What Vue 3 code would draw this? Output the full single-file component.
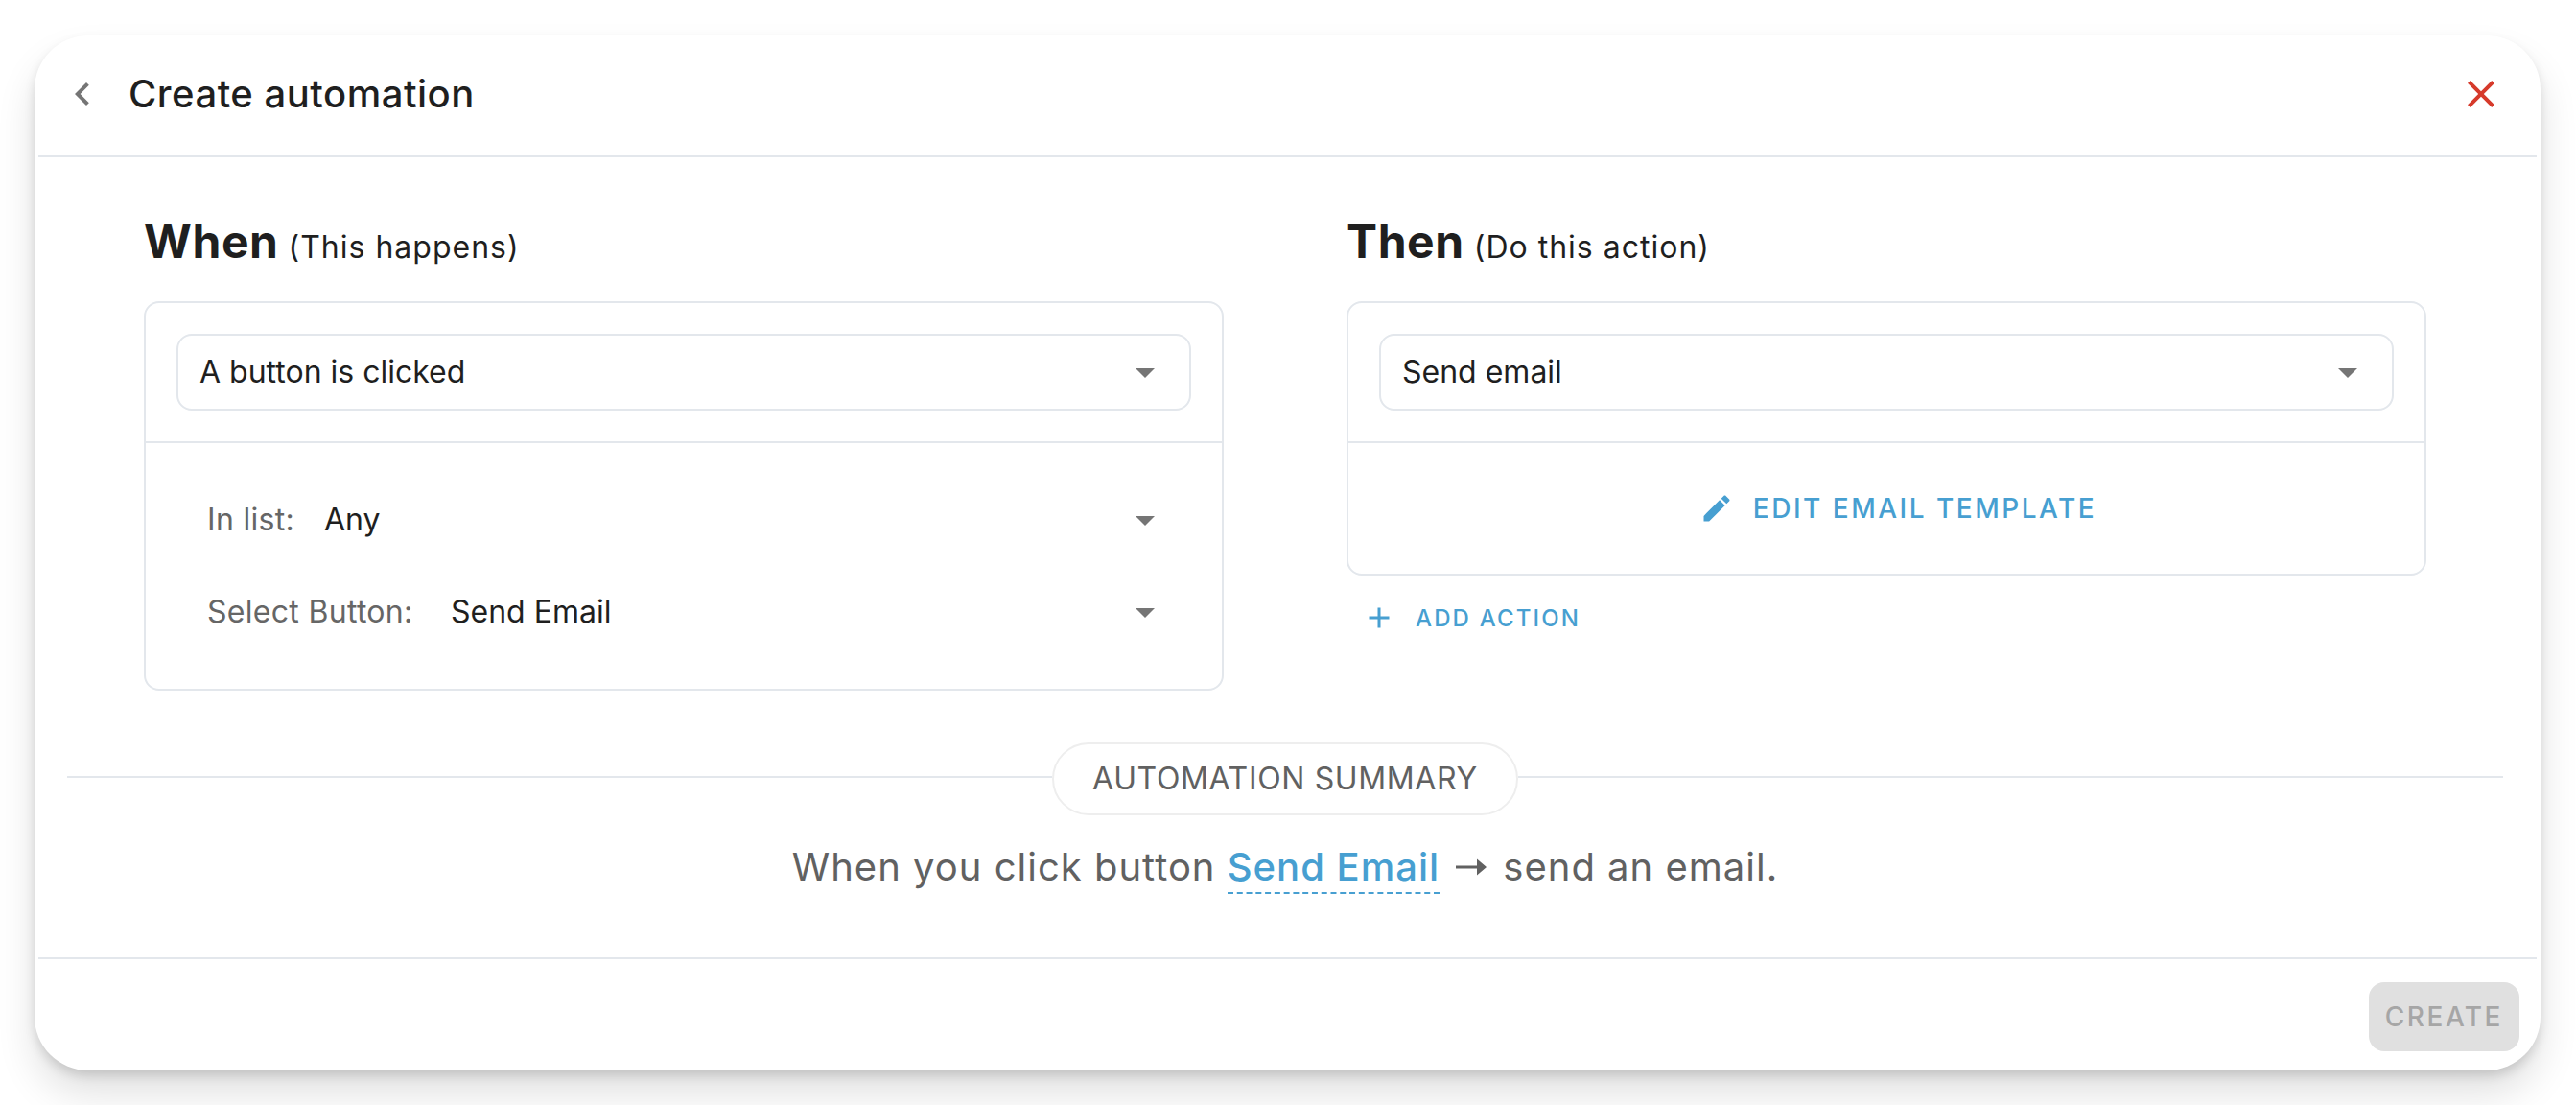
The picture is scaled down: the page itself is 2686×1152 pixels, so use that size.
<template>
  <main class="automation-page">
    <section class="automation-dialog" aria-labelledby="dialog-title">
      <header class="automation-dialog__header">
        <button class="icon-btn" type="button" aria-label="Back">
          <svg viewBox="0 0 24 24"><path :d="icons.chevronLeft" /></svg>
        </button>
        <h1 id="dialog-title">Create automation</h1>
        <button class="icon-btn icon-btn--close" type="button" aria-label="Close">
          <svg viewBox="0 0 24 24"><path :d="icons.close" /></svg>
        </button>
      </header>

      <div class="automation-dialog__body">
        <div class="columns">
          <div class="column">
            <h2>When <small>(This happens)</small></h2>
            <div class="panel">
              <div class="panel__head">
                <div class="field field--outlined">
                  <select v-model="trigger" aria-label="Trigger">
                    <option v-for="t in triggers" :key="t">{{ t }}</option>
                  </select>
                  <svg class="field__caret" viewBox="0 0 24 24"><path :d="icons.menuDown" /></svg>
                </div>
              </div>
              <div class="panel__fields">
                <div v-for="f in fields" :key="f.id" class="field">
                  <label :for="f.id" :style="{ width: f.labelWidth + 'px' }">{{ f.label }}</label>
                  <select :id="f.id" v-model="f.value">
                    <option v-for="o in f.options" :key="o">{{ o }}</option>
                  </select>
                  <svg class="field__caret" viewBox="0 0 24 24"><path :d="icons.menuDown" /></svg>
                </div>
              </div>
            </div>
          </div>

          <div class="column">
            <h2>Then <small>(Do this action)</small></h2>
            <div class="panel">
              <div class="panel__head">
                <div class="field field--outlined">
                  <select v-model="action" aria-label="Action">
                    <option v-for="a in actions" :key="a">{{ a }}</option>
                  </select>
                  <svg class="field__caret" viewBox="0 0 24 24"><path :d="icons.menuDown" /></svg>
                </div>
              </div>
              <div class="panel__action">
                <button class="text-btn" type="button">
                  <svg viewBox="0 0 24 24"><path :d="icons.pencil" /></svg>
                  Edit email template
                </button>
              </div>
            </div>
            <button class="text-btn text-btn--small" type="button">
              <svg viewBox="0 0 24 24"><path :d="icons.plus" /></svg>
              Add action
            </button>
          </div>
        </div>

        <div class="summary">
          <div class="summary__divider"><span>AUTOMATION SUMMARY</span></div>
          <p>
            When you click button <a href="#button">{{ fields[1].value }}</a>
            <svg class="summary__arrow" viewBox="0 0 32 18" role="img" aria-label="then">
              <path d="M0 7.5H22V0.5L32 9L22 17.5V10.5H0Z" />
            </svg>
            send an email.
          </p>
        </div>
      </div>

      <footer class="automation-dialog__footer">
        <button class="create-btn" type="button" disabled>Create</button>
      </footer>
    </section>
  </main>
</template>

<script setup>
import { ref, reactive } from 'vue'

const triggers = ['A button is clicked', 'A card is created', 'A card is moved']
const actions = ['Send email', 'Move card', 'Add label']

const trigger = ref('A button is clicked')
const action = ref('Send email')

const fields = reactive([
  { id: 'list', label: 'In list:', labelWidth: 122, value: 'Any', options: ['Any', 'To do', 'Done'] },
  { id: 'button', label: 'Select Button:', labelWidth: 254, value: 'Send Email', options: ['Send Email', 'Archive'] }
])

const icons = {
  chevronLeft: 'M15.41,16.58L10.83,12L15.41,7.41L14,6L8,12L14,18L15.41,16.58Z',
  close: 'M19,6.41L17.59,5L12,10.59L6.41,5L5,6.41L10.59,12L5,17.59L6.41,19L12,13.41L17.59,19L19,17.59L13.41,12L19,6.41Z',
  menuDown: 'M7,10L12,15L17,10H7Z',
  pencil: 'M20.71,7.04C21.1,6.65 21.1,6 20.71,5.63L18.37,3.29C18,2.9 17.35,2.9 16.96,3.29L15.12,5.12L18.87,8.87M3,17.25V21H6.75L17.81,9.93L14.06,6.18L3,17.25Z',
  plus: 'M19,13H13V19H11V13H5V11H11V5H13V11H19V13Z'
}
</script>

<style>
body {
  margin: 0;
  background: #fff;
}
</style>

<style scoped>
.automation-page {
  box-sizing: border-box;
  min-height: 100vh;
  padding: 37px 37px 36px 36px;
  overflow: hidden;
  font-family: Inter, "Liberation Sans", sans-serif;
  color: #1f1f1f;
}
.automation-page svg { fill: currentColor; flex: none; }
.automation-dialog {
  border-radius: 56px;
  background: #fff;
  box-shadow:
    0 6px 12px -1px rgba(0, 0, 0, 0.15),
    0 24px 40px rgba(0, 0, 0, 0.12);
}
.automation-dialog__header {
  display: flex;
  align-items: center;
  margin: 0 4px;
  padding: 37px 34px 40px 22px;
  border-bottom: 2px solid #e3e7ec;
}
h1 {
  flex: 1;
  margin: 0 0 0 24px;
  font-size: 40px;
  line-height: 48px;
  font-weight: 500;
  letter-spacing: 0.0125em;
}
button {
  padding: 0;
  border: 0;
  background: none;
  font-family: inherit;
  cursor: pointer;
}
.icon-btn { width: 48px; height: 48px; color: #757575; }
.icon-btn svg { display: block; width: 48px; height: 48px; }
.icon-btn--close { color: #d63a2b; }

.automation-dialog__body { padding: 56px 39px 66px 34px; }
.columns {
  display: grid;
  grid-template-columns: 1fr 1fr;
  gap: 128px;
  padding: 0 80px;
}
h2 {
  margin: 0 0 30px;
  font-size: 48px;
  line-height: 64px;
  font-weight: 700;
  letter-spacing: 0.0125em;
}
h2 small {
  margin-left: -2px;
  font-size: 32px;
  line-height: 32px;
  font-weight: 400;
  letter-spacing: 0.03125em;
}
.panel { border: 2px solid #e3e7ec; border-radius: 16px; }
.panel__head { padding: 32px; border-bottom: 2px solid #e3e7ec; }
.panel__fields {
  display: flex;
  flex-direction: column;
  gap: 16px;
  padding: 40px 34px 40px 40px;
}
.panel__action {
  display: flex;
  justify-content: center;
  padding: 40px 0 40px 24px;
}
.field {
  display: flex;
  align-items: center;
  box-sizing: border-box;
  height: 80px;
  padding: 0 22px 0 24px;
  font-size: 32px;
  line-height: 40px;
}
.field--outlined {
  padding-left: 22px;
  border: 2px solid #e3e7ec;
  border-radius: 16px;
}
.field label {
  color: #666;
  letter-spacing: 0.009375em;
  white-space: nowrap;
}
.field select {
  flex: 1;
  min-width: 0;
  height: 48px;
  padding: 0;
  border: 0;
  background: none;
  appearance: none;
  font: inherit;
  color: inherit;
}
.field__caret { width: 48px; height: 48px; color: #757575; }

.text-btn {
  display: flex;
  align-items: center;
  gap: 20px;
  height: 56px;
  color: #479fd1;
  font-size: 28px;
  font-weight: 500;
  letter-spacing: 0.0892857em;
  text-transform: uppercase;
}
.text-btn svg { width: 36px; height: 36px; }
.text-btn--small { margin: 16px 0 0 16px; font-size: 24px; }

.summary { margin-top: 54px; color: #616161; }
.summary__divider { display: flex; align-items: center; }
.summary__divider::before,
.summary__divider::after {
  content: "";
  flex: 1;
  height: 2px;
  margin-bottom: 4px;
  background: #e3e7ec;
}
.summary__divider span {
  padding: 16px 40px;
  border: 2px solid #eee;
  border-radius: 38px;
  font-size: 32px;
  line-height: 40px;
  letter-spacing: 0.02em;
}
.summary p {
  margin: 26px 0 0;
  font-size: 40px;
  line-height: 56px;
  letter-spacing: 0.025em;
  text-align: center;
}
.summary a {
  padding-bottom: 2px;
  border-bottom: 2px dashed #479fd1;
  color: #479fd1;
  font-weight: 500;
  text-decoration: none;
}
.summary__arrow {
  width: 32px;
  height: 18px;
  margin: 0 5px 0 17px;
  vertical-align: 5px;
}

.automation-dialog__footer {
  display: flex;
  justify-content: flex-end;
  margin: 0 4px;
  padding: 24px 18px 20px;
  border-top: 2px solid #e3e7ec;
}
.create-btn {
  height: 72px;
  padding: 0 17px;
  border-radius: 16px;
  background: #e0e0e0;
  color: #a6a6a6;
  font-size: 28px;
  font-weight: 500;
  letter-spacing: 0.0892857em;
  text-transform: uppercase;
  cursor: default;
}
</style>
